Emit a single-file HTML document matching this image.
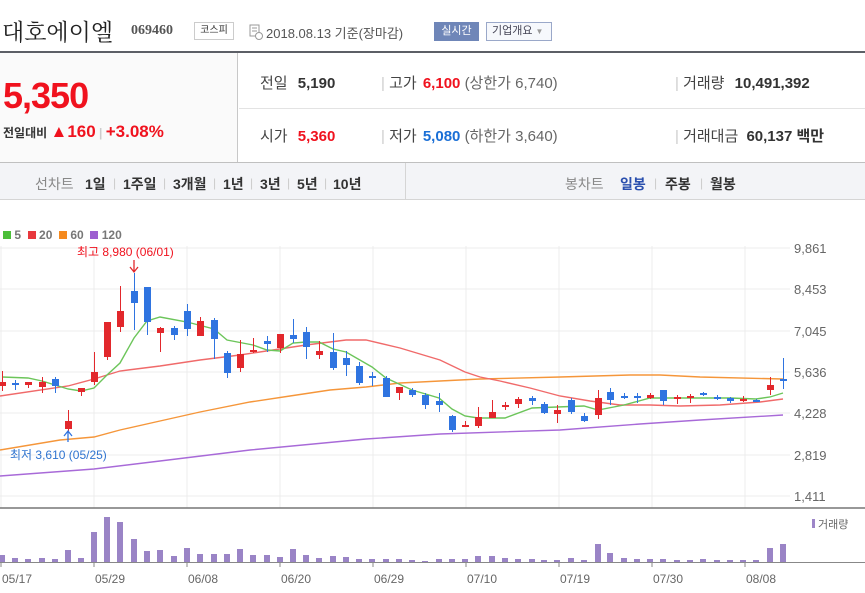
<!DOCTYPE html>
<html><head><meta charset="utf-8">
<style>
*{margin:0;padding:0;box-sizing:border-box}
body{width:865px;height:593px;overflow:hidden;background:#fff;font-family:"Liberation Sans","Noto Sans CJK KR",sans-serif;position:relative;color:#333}
.a{position:absolute;white-space:nowrap}
.b{font-weight:bold}
.t{position:absolute;top:174px;font-size:14px;font-weight:bold;color:#333}
.sp{position:absolute;top:176px;font-size:12px;color:#ccc}
</style></head><body>
<!-- header -->
<div class="a" style="left:2px;top:14px;font-size:23px;color:#222;font-family:'Noto Serif CJK SC','Noto Sans CJK KR',serif;letter-spacing:0px">대호에이엘</div>
<div class="a b" style="left:131px;top:23px;font-size:14px;color:#555;font-family:'Liberation Serif',serif">069460</div>
<div class="a" style="left:194px;top:22px;width:40px;height:18px;border:1px solid #ccc;font-size:10px;text-align:center;line-height:16px;color:#333">코스피</div>
<svg class="a" style="left:249px;top:24px" width="14" height="16"><rect x="1" y="1" width="9" height="11" fill="none" stroke="#999"/><line x1="3" y1="4" x2="8" y2="4" stroke="#999"/><line x1="3" y1="7" x2="8" y2="7" stroke="#999"/><circle cx="10" cy="12" r="3.5" fill="#fff" stroke="#999"/></svg>
<div class="a" style="left:266px;top:23px;font-size:13px;color:#555">2018.08.13 기준(장마감)</div>
<div class="a" style="left:434px;top:22px;width:45px;height:19px;background:#6f86b8;color:#fff;font-size:11px;text-align:center;line-height:19px">실시간</div>
<div class="a" style="left:486px;top:22px;width:66px;height:19px;border:1px solid #9aa8c9;background:#f6f8fc;color:#445;font-size:11px;line-height:17px;padding-left:5px">기업개요 <span style="font-size:8px;color:#999">▼</span></div>
<div class="a" style="left:0;top:51px;width:865px;height:2px;background:#5c5f66"></div>
<!-- price panel -->
<div class="a" style="left:0;top:53px;width:238px;height:109px;background:#fafafa;border-right:1px solid #c8c8c8"></div>
<div class="a b" style="left:3px;top:75px;font-size:36px;color:#f0121e;letter-spacing:-1px">5,350</div>
<div class="a" style="left:3px;top:122px;font-size:12px;color:#333;font-weight:bold">전일대비 <span style="color:#f0121e;font-size:17px">▲160</span> <span style="color:#ccc;font-size:12px">|</span> <span style="color:#f0121e;font-size:17px">+3.08%</span></div>
<div class="a" style="left:239px;top:108px;width:626px;height:1px;background:#e3e3e3"></div>
<div class="a" style="left:0;top:162px;width:865px;height:1px;background:#c0c0c0"></div>
<div class="a" style="left:260px;top:72px;font-size:15px;color:#444">전일 <b style="margin-left:6px;color:#333">5,190</b></div>
<div class="a" style="left:260px;top:125px;font-size:15px;color:#444">시가 <b style="margin-left:6px;color:#f0121e">5,360</b></div>
<div class="a" style="left:381px;top:72px;font-size:15px;color:#444"><span style="color:#ccc">|</span> 고가 <b style="margin-left:2px;color:#f0121e">6,100</b> <span style="color:#666">(상한가 6,740)</span></div>
<div class="a" style="left:381px;top:125px;font-size:15px;color:#444"><span style="color:#ccc">|</span> 저가 <b style="margin-left:2px;color:#1a6fd6">5,080</b> <span style="color:#666">(하한가 3,640)</span></div>
<div class="a" style="left:675px;top:72px;font-size:15px;color:#444"><span style="color:#ccc">|</span> 거래량 <b style="margin-left:6px;color:#333">10,491,392</b></div>
<div class="a" style="left:675px;top:125px;font-size:15px;color:#444"><span style="color:#ccc">|</span> 거래대금 <b style="margin-left:4px;color:#333">60,137 백만</b></div>
<!-- tabs -->
<div class="a" style="left:0;top:163px;width:865px;height:37px;background:#f3f4f7;border-bottom:1px solid #d5d5d5"></div>
<div class="a" style="left:405px;top:163px;width:1px;height:37px;background:#d5d5d5"></div>
<div class="a" style="left:35px;top:174px;font-size:14px;color:#888">선차트</div>
<span class="t" style="left:85px">1일</span><span class="sp" style="left:113px">|</span>
<span class="t" style="left:123px">1주일</span><span class="sp" style="left:163px">|</span>
<span class="t" style="left:173px">3개월</span><span class="sp" style="left:213px">|</span>
<span class="t" style="left:223px">1년</span><span class="sp" style="left:250px">|</span>
<span class="t" style="left:260px">3년</span><span class="sp" style="left:287px">|</span>
<span class="t" style="left:297px">5년</span><span class="sp" style="left:324px">|</span>
<span class="t" style="left:333px">10년</span>
<div class="a" style="left:565px;top:174px;font-size:14px;color:#888">봉차트</div>
<span class="t" style="left:620px;color:#2a4fae">일봉</span><span class="sp" style="left:654px">|</span>
<span class="t" style="left:665px">주봉</span><span class="sp" style="left:700px">|</span>
<span class="t" style="left:710px">월봉</span>
<!-- chart -->
<svg id="ch" class="a" style="left:0;top:0" width="865" height="593"></svg>
<div class="a b" style="left:3px;top:228px;font-size:12px;color:#777"><span style="display:inline-block;width:8px;height:8px;background:#4cbf3a"></span> 5 &nbsp;<span style="display:inline-block;width:8px;height:8px;background:#e8383d"></span> 20 &nbsp;<span style="display:inline-block;width:8px;height:8px;background:#f58a1f"></span> 60 &nbsp;<span style="display:inline-block;width:8px;height:8px;background:#9d5fd0"></span> 120</div>
<div class="a" style="left:77px;top:243px;font-size:12px;color:#f0121e">최고 8,980 (06/01)</div>
<div class="a" style="left:10px;top:446px;font-size:12px;color:#2f74d0">최저 3,610 (05/25)</div>
<div class="a" style="left:812px;top:516px;font-size:11px;color:#666"><span style="display:inline-block;width:3px;height:9px;background:#9d86c8"></span> 거래량</div>
<script>
var s=document.getElementById('ch'),h='';
var gy=[248,289,331,372,413,455,496],lab=['9,861','8,453','7,045','5,636','4,228','2,819','1,411'];
gy.forEach(function(y,i){h+='<line x1="0" y1="'+y+'" x2="790" y2="'+y+'" stroke="#ececec"/>';h+='<text x="794" y="'+(y+5)+'" font-size="13" fill="#666" font-family="Liberation Sans">'+lab[i]+'</text>';});
var gx=[1,94,187,280,373,466,559,652,745],dl=['05/17','05/29','06/08','06/20','06/29','07/10','07/19','07/30','08/08'];
gx.forEach(function(x,i){h+='<line x1="'+x+'" y1="246" x2="'+x+'" y2="508" stroke="#ececec"/><line x1="'+x+'" y1="562" x2="'+x+'" y2="567" stroke="#888"/>';h+='<text x="'+(x+1)+'" y="583" font-size="12" fill="#666" font-family="Liberation Sans">'+dl[i]+'</text>';});
h+='<line x1="0" y1="508" x2="865" y2="508" stroke="#777" stroke-width="1.5"/><line x1="0" y1="562.5" x2="865" y2="562.5" stroke="#888"/>';
function pl(p,c){h+='<polyline fill="none" stroke="'+c+'" stroke-width="1.4" points="'+p+'"/>';}
pl('0,476 94,469 160,461 250,450 366,439 440,434 560,430 640,424 700,420 783,415','#a86ad8');
pl('0,450 60,440 94,437 120,430 160,421 200,412 250,402 290,396 330,390 366,387 400,383 440,381 480,379 560,377 630,375 660,375 700,377 783,379','#f5963a');
pl('0,396 68,386 94,379 120,371 160,366 200,360 240,355 306,345 346,340 366,340 400,348 440,360 465,372 480,377 500,381 530,388 560,396 590,401 620,405 650,405 680,406 720,405 760,402 783,399','#f06a6a');
pl('2,377 28,378 42,381 68,389 81,391 94,388 107,375 120,363 134,338 147,321 160,317 187,322 214,329 227,340 253,345 267,350 280,351 293,343 306,342 319,342 333,349 346,352 372,367 386,378 412,390 439,398 452,409 465,416 478,418 505,418 532,408 557,407 584,406 598,410 624,405 650,398 690,398 730,398 756,399 770,397 783,393','#6cc55a');
var c=[[2,'r',382,386,371,391],[15,'b',383,384,380,390],[28,'r',382,385,382,388],[42,'r',382,387,377,393],[55,'b',379,386,377,393],[68,'r',421,429,410,432],[81,'r',388,392,388,396],[94,'r',372,382,352,385],[107,'r',322,357,322,360],[120,'r',311,327,286,332],[134,'b',291,303,273,330],[147,'b',287,322,287,335],[160,'r',328,333,327,352],[174,'b',328,335,326,340],[187,'b',311,329,304,336],[200,'r',321,336,317,336],[214,'b',320,339,318,359],[227,'b',353,373,351,378],[240,'r',354,368,340,372],[253,'r',350,352,338,353],[267,'b',341,344,336,352],[280,'r',334,348,334,353],[293,'b',335,339,319,343],[306,'b',332,347,327,359],[319,'r',351,355,341,359],[333,'b',352,368,333,370],[346,'b',358,365,351,376],[359,'b',366,383,362,385],[372,'b',376,377,372,386],[386,'b',378,397,376,397],[399,'r',387,393,387,400],[412,'b',390,395,388,397],[425,'b',395,405,393,409],[439,'b',401,405,393,412],[452,'b',416,430,415,432],[465,'r',425,427,421,427],[478,'r',417,426,407,428],[492,'r',412,418,400,418],[505,'r',405,407,402,410],[518,'r',399,404,397,408],[532,'b',398,401,396,405],[544,'b',404,413,402,414],[557,'r',410,414,405,423],[571,'b',400,412,398,414],[584,'b',416,421,413,422],[598,'r',398,415,390,419],[610,'b',392,400,388,405],[624,'b',396,397,393,399],[637,'b',396,397,393,403],[650,'r',395,398,393,399],[663,'b',390,401,390,405],[677,'r',397,399,395,404],[690,'r',396,397,394,403],[703,'b',393,395,392,396],[717,'b',397,398,395,400],[730,'b',398,401,397,403],[743,'r',399,401,396,402],[756,'b',400,401,399,402],[770,'r',385,390,377,395],[783,'b',379,380,358,389]];
c.forEach(function(d){var col=d[1]=='r'?'#e2282c':'#2f74e0';h+='<line x1="'+(d[0]+.5)+'" y1="'+d[4]+'" x2="'+(d[0]+.5)+'" y2="'+d[5]+'" stroke="'+col+'"/><rect x="'+(d[0]-3)+'" y="'+d[2]+'" width="7" height="'+Math.max(2,d[3]-d[2])+'" fill="'+col+'"/>';});
var v=[[2,555],[15,558],[28,559],[42,558],[55,559],[68,550],[81,558],[94,532],[107,517],[120,522],[134,539],[147,551],[160,550],[174,556],[187,548],[200,554],[214,554],[227,554],[240,549],[253,555],[267,555],[280,557],[293,549],[306,555],[319,558],[333,556],[346,557],[359,559],[372,559],[386,559],[399,559],[412,560],[425,561],[439,559],[452,559],[465,559],[478,556],[492,556],[505,558],[518,559],[532,559],[544,560],[557,560],[571,558],[584,560],[598,544],[610,553],[624,558],[637,559],[650,559],[663,559],[677,560],[690,560],[703,559],[717,560],[730,560],[743,560],[756,560],[770,548],[783,544]];
v.forEach(function(d){h+='<rect x="'+(d[0]-3)+'" y="'+d[1]+'" width="6" height="'+(562-d[1])+'" fill="#9a84c6"/>';});
h+='<path d="M134 260 V272 M130 267 L134 272 L138 267" stroke="#e2282c" fill="none" stroke-width="1.3"/>';
h+='<path d="M68 442 V431 M64 436 L68 431 L72 436" stroke="#2f74e0" fill="none" stroke-width="1.3"/>';
s.innerHTML=h;
</script>
</body></html>
